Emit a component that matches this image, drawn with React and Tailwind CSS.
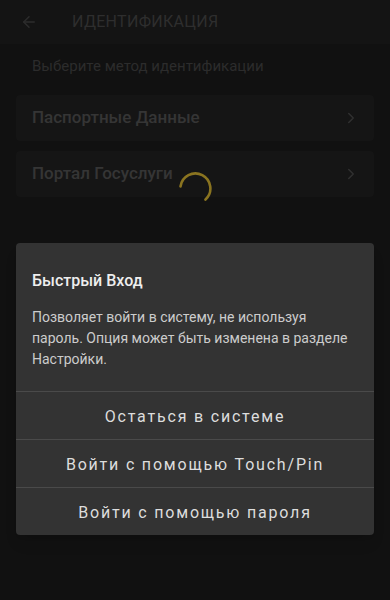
import { ChevronRight, ArrowLeft } from "lucide-react";

export default function App() {
  const options = ["Паспортные Данные", "Портал Госуслуги"];
  const actions = [
    "Остаться в системе",
    "Войти с помощью Touch/Pin",
    "Войти с помощью пароля",
  ];

  return (
    <div
      className="relative w-[390px] h-[600px] overflow-hidden bg-[#111111]"
      style={{ fontFamily: "Roboto, 'Noto Sans', sans-serif" }}
    >
      {/* dimmed page */}
      <div className="h-[44px] flex items-center bg-[#141414] pl-[20px]">
        <ArrowLeft size={18} strokeWidth={2} className="text-[#2c2c2c]" />
        <span className="ml-[34px] text-[16px] text-[#2e2e2e] uppercase tracking-[0.3px]">
          Идентификация
        </span>
      </div>
      <div className="px-[16px]">
        <p className="pl-[16px] pt-[12px] text-[15px] leading-[20px] text-[#2c2c2c]">
          Выберите метод идентификации
        </p>
        <div className="mt-[19px] flex flex-col gap-[10px]">
          {options.map((o) => (
            <div
              key={o}
              className="h-[46px] rounded-[4px] bg-[#151515] flex items-center justify-between pl-[16px] pr-[14px]"
            >
              <span className="text-[17px] font-medium text-[#353535]">{o}</span>
              <ChevronRight size={18} strokeWidth={2} className="text-[#303030]" />
            </div>
          ))}
        </div>
      </div>

      {/* spinner */}
      <svg
        className="absolute left-[178px] top-[172px]"
        width="34"
        height="34"
        viewBox="0 0 34 34"
      >
        <path
          d="M2.5 14.5 A15 15 0 1 1 27.5 27.5"
          fill="none"
          stroke="#8a7420"
          strokeWidth="2.6"
          strokeLinecap="round"
        />
      </svg>

      {/* dialog */}
      <div className="absolute left-[16px] top-[243px] w-[358px] rounded-[4px] bg-[#333333] shadow-lg">
        <div className="px-[16px] pt-[26px] pb-[21px]">
          <h2 className="text-[16px] leading-[24px] font-medium text-[#eeeeee]">
            Быстрый Вход
          </h2>
          <p className="mt-[14px] text-[14px] leading-[21px] text-[#cccccc]">
            Позволяет войти в систему, не используя пароль. Опция может быть изменена в
            разделе Настройки.
          </p>
        </div>
        {actions.map((a) => (
          <div
            key={a}
            className="h-[48px] pt-[2px] border-t border-[#4a4a4a] flex items-center justify-center text-[16px] tracking-[1.8px] text-[#dddddd]"
          >
            {a}
          </div>
        ))}
      </div>
    </div>
  );
}
